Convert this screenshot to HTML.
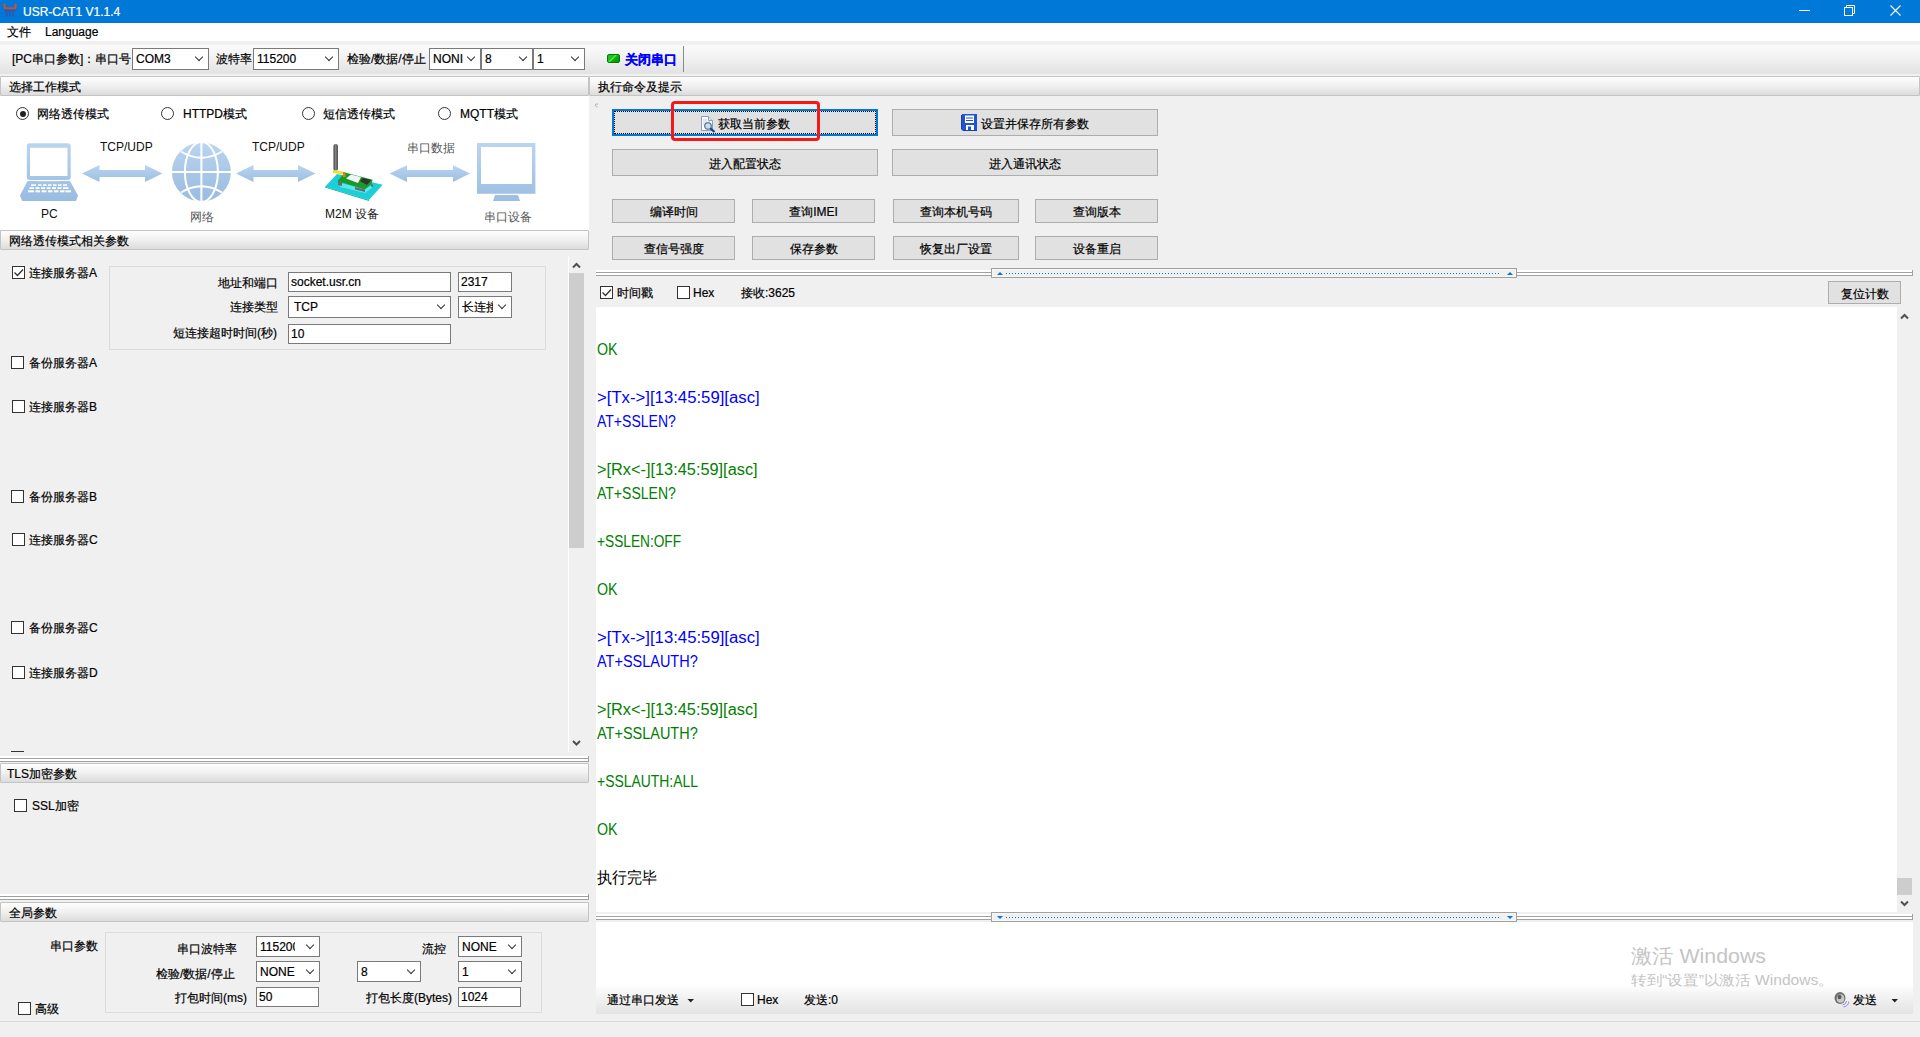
<!DOCTYPE html>
<html><head><meta charset="utf-8">
<style>
*{margin:0;padding:0;box-sizing:border-box}
html,body{width:1920px;height:1037px;overflow:hidden;background:#f0f0f0;font-family:"Liberation Sans",sans-serif;font-size:12px;color:#000;-webkit-text-stroke:0.2px currentColor}
.a{position:absolute}
.t{position:absolute;white-space:nowrap;line-height:14px}
.hdr{position:absolute;height:20px;border:1px solid #c4c4c4;border-radius:1px;background:linear-gradient(#fdfdfd,#f2f2f2 45%,#dcdcdc);}
.hdr span{position:absolute;left:8px;top:3px;line-height:14px;white-space:nowrap}
.cmb{position:absolute;background:#fff;border:1px solid #7a7a7a;height:22px}
.cmb span{position:absolute;left:3px;top:3px;line-height:14px;white-space:nowrap}
.cmb i{position:absolute;right:6px;top:5px;width:6px;height:6px;border-right:1px solid #333;border-bottom:1px solid #333;transform:rotate(45deg);}
.inp{position:absolute;background:#fff;border:1px solid #7a7a7a;height:20px}
.inp span{position:absolute;left:2px;top:2px;line-height:14px;white-space:nowrap}
.btn{position:absolute;background:#e1e1e1;border:1px solid #adadad;text-align:center;white-space:nowrap}
.btn span{position:absolute;left:0;right:0;line-height:14px}
.cb{position:absolute;width:13px;height:13px;border:1px solid #333;background:#fff}
.rb{position:absolute;width:13px;height:13px;border:1px solid #333;border-radius:50%;background:#fff}
.split{position:absolute;height:6px;background:linear-gradient(#fff 0 2px,#a0a0a0 2px 3px,#fff 3px 5px,#a0a0a0 5px 6px);border-right:1px solid #a0a0a0}
.hbox{position:absolute;width:526px;height:10px;background:#f0f0f0;border:1px solid #a0a0a0;box-shadow:inset 0 0 0 1px #f7f7f7}
.dots{position:absolute;height:1px;background:repeating-linear-gradient(90deg,#0a74d6 0 1px,transparent 1px 3px)}
.log{position:absolute;left:597px;transform-origin:0 0;-webkit-text-stroke:0;font-size:16px;line-height:20px;white-space:nowrap}
.g{color:#008000}.b{color:#0000ff}
.ic{fill:#a9c9ec}
</style></head><body>
<!-- title bar -->
<div class="a" style="left:0;top:0;width:1920px;height:23px;background:#0078d7"></div>
<div class="t" style="left:23px;top:5px;color:#fff;font-size:12px">USR-CAT1 V1.1.4</div>
<!-- menu -->
<div class="a" style="left:0;top:23px;width:1920px;height:18px;background:#fff"></div>
<div class="t" style="left:7px;top:25px">文件</div>
<div class="t" style="left:45px;top:25px">Language</div>
<!-- toolbar -->
<div class="a" style="left:0;top:45px;width:1920px;height:29px;background:linear-gradient(#fbfbfb,#f0f0f0 50%,#e2e2e2)"></div>
<div class="t" style="left:12px;top:52px">[PC串口参数]：串口号</div>
<div class="cmb" style="left:132px;top:48px;width:77px"><span>COM3</span><i></i></div>
<div class="t" style="left:216px;top:52px">波特率</div>
<div class="cmb" style="left:253px;top:48px;width:86px"><span>115200</span><i></i></div>
<div class="t" style="left:347px;top:52px">检验/数据/停止</div>
<div class="cmb" style="left:429px;top:48px;width:52px"><span>NONI</span><i></i></div>
<div class="cmb" style="left:481px;top:48px;width:52px"><span>8</span><i></i></div>
<div class="cmb" style="left:533px;top:48px;width:52px"><span>1</span><i></i></div>
<div class="a" style="left:607px;top:54px;width:13px;height:9px;background:linear-gradient(135deg,#20c020 0 35%,#50f050 45%,#10b010 55%,#009000);border:1px solid #007a00;border-radius:2px"></div>
<div class="t" style="left:625px;top:53px;color:#0000ff;font-weight:bold;font-size:13px">关闭串口</div>
<div class="a" style="left:683px;top:46px;width:1px;height:26px;background:#8a8a8a"></div>

<!-- headers -->
<div class="hdr" style="left:0px;top:76px;width:589px"><span>选择工作模式</span></div>
<div class="hdr" style="left:589px;top:76px;width:1331px"><span style="left:8px">执行命令及提示</span></div>
<svg class="a" style="left:594px;top:103px" width="6" height="5"><path d="M4,1 Q1,0.5 1,2.5 L3.5,4" stroke="#aaa" stroke-width="0.9" fill="none"/></svg>

<!-- mode panel -->
<div class="a" style="left:0;top:96px;width:589px;height:134px;background:#fff"></div>
<div class="rb" style="left:16px;top:107px"><div class="a" style="left:2.5px;top:2.5px;width:6px;height:6px;border-radius:50%;background:#222"></div></div>
<div class="t" style="left:37px;top:107px">网络透传模式</div>
<div class="rb" style="left:161px;top:107px"></div>
<div class="t" style="left:183px;top:107px">HTTPD模式</div>
<div class="rb" style="left:302px;top:107px"></div>
<div class="t" style="left:323px;top:107px">短信透传模式</div>
<div class="rb" style="left:438px;top:107px"></div>
<div class="t" style="left:460px;top:107px">MQTT模式</div>


<svg class="a" style="left:0;top:130px" width="589" height="100" viewBox="0 130 589 100">
<defs>
<linearGradient id="bg1" x1="0" y1="0" x2="0" y2="1"><stop offset="0" stop-color="#bad5ef"/><stop offset="1" stop-color="#98bbe1"/></linearGradient><linearGradient id="lap" gradientUnits="userSpaceOnUse" x1="0" y1="143" x2="0" y2="201"><stop offset="0" stop-color="#bad5ef"/><stop offset="1" stop-color="#98bbe1"/></linearGradient><linearGradient id="mon" gradientUnits="userSpaceOnUse" x1="0" y1="143" x2="0" y2="201"><stop offset="0" stop-color="#bad5ef"/><stop offset="1" stop-color="#9cbee2"/></linearGradient>
<linearGradient id="ar" x1="0" y1="0" x2="0" y2="1"><stop offset="0" stop-color="#b9d4ee"/><stop offset="1" stop-color="#9dbfe3"/></linearGradient>
</defs>
<!-- laptop -->
<path fill="url(#lap)" d="M30,143.2 H67.7 A3,3 0 0 1 70.7,146.2 V177 A3,3 0 0 1 67.7,180 H29.8 A3,3 0 0 1 26.8,177 V146.2 A3,3 0 0 1 30,143.2 Z M30,147.8 V176 H67.5 V147.8 Z"/>
<path fill="url(#lap)" d="M27.5,181 H70 L78,195.4 L76,201 H22.2 L20,195.4 Z"/>
<g fill="#fff">
<rect x="31" y="184.3" width="5" height="1.6"/><rect x="38" y="184.3" width="3.5" height="1.6"/><rect x="43" y="184.3" width="3.5" height="1.6"/><rect x="48" y="184.3" width="3.5" height="1.6"/><rect x="53" y="184.3" width="3.5" height="1.6"/><rect x="58" y="184.3" width="3.5" height="1.6"/><rect x="63" y="184.3" width="4" height="1.6"/>
<rect x="29.5" y="187.2" width="4.5" height="1.8"/><rect x="35.5" y="187.2" width="4" height="1.8"/><rect x="41" y="187.2" width="4" height="1.8"/><rect x="46.5" y="187.2" width="4" height="1.8"/><rect x="52" y="187.2" width="4" height="1.8"/><rect x="57.5" y="187.2" width="4" height="1.8"/><rect x="63" y="187.2" width="5.5" height="1.8"/>
<rect x="28" y="190.3" width="6" height="2"/><rect x="35.5" y="190.3" width="4.5" height="2"/><rect x="41.5" y="190.3" width="5" height="2"/><rect x="48" y="190.3" width="4.5" height="2"/><rect x="54" y="190.3" width="4.5" height="2"/><rect x="60" y="190.3" width="4.5" height="2"/><rect x="65.5" y="190.3" width="5.5" height="2"/>
<rect x="37" y="180.2" width="23" height="1"/>
</g>
<!-- arrows -->
<path fill="url(#ar)" d="M82,173.4 L99.5,165 V170 H145 V165 L162.5,173.4 L145,182 V177 H99.5 V182 Z"/>
<path fill="url(#ar)" d="M236,173.4 L253.5,165 V170 H298 V165 L315.5,173.4 L298,182 V177 H253.5 V182 Z"/>
<path fill="url(#ar)" d="M389.5,173.5 L407,165.2 V170 H453 V165.2 L470,173.5 L453,182 V177 H407 V182 Z"/>
<!-- globe -->
<g>
<circle cx="201.4" cy="172" r="29.5" fill="url(#bg1)"/>
<g stroke="#fff" stroke-width="2" fill="none">
<line x1="171" y1="172" x2="232" y2="172"/>
<line x1="201.4" y1="142" x2="201.4" y2="202"/>
<ellipse cx="201.4" cy="172" rx="16.5" ry="30"/>
<path d="M181,151.5 Q201.4,164 222,151.5"/>
<path d="M181,192.5 Q201.4,180 222,192.5"/>
</g>
</g>
<!-- M2M device -->
<g>
<path fill="#18d0d6" d="M325,186.7 L337,174 L382.7,184.8 L368.9,200 Z"/><path fill="#5ee6ea" d="M340,183 L365,189 L372,185 L372,188 L365,193 L340,187 Z"/>
<path fill="#0aa8ad" d="M325,186.7 L368.9,200 L369,201 L325,187.6 Z"/>
<path fill="#6a6a7a" d="M338,181 L342,182 L342,186 L338,185 Z M355,187 L365,189.5 L365,192 L355,189.5 Z M371,184 L373,184.5 L373,187 L371,186.5 Z"/>
<path fill="#1a9a2a" d="M337.5,181 L345,172.6 L372.6,179.8 L371.4,183.9 L364.8,189.5 Z"/>
<path fill="#f4f4f4" d="M346,178.5 L351,174.5 L361,177 L358,183 Z"/>
<path fill="#333" d="M360,181 L363,178 L371,180 L367,185 Z"/>
<linearGradient id="ant" x1="0" y1="0" x2="1" y2="0"><stop offset="0" stop-color="#3a3a3a"/><stop offset=".5" stop-color="#8a8a8a"/><stop offset="1" stop-color="#3a3a3a"/></linearGradient><rect x="333.5" y="144" width="4.4" height="26.7" rx="2" fill="url(#ant)"/>
<path fill="#f0e030" d="M333,170 L345,172 L345,175 L333,173 Z"/>
<rect x="343" y="172" width="2.5" height="5" fill="#d08a20"/>
</g>
<!-- monitor -->
<path fill="url(#mon)" d="M477,143 H535.4 V193.8 H477 Z M481,147 V184 H532 V147 Z"/>
<path fill="url(#mon)" d="M495,195 H518 L520,201 H493 Z"/>
</svg>
<div class="t" style="left:100px;top:140px;font-size:12px;color:#111;-webkit-text-stroke:0">TCP/UDP</div>
<div class="t" style="left:252px;top:140px;font-size:12px;color:#111;-webkit-text-stroke:0">TCP/UDP</div>
<div class="t" style="left:407px;top:141px;font-size:11.6px;color:#555;-webkit-text-stroke:0">串口数据</div>
<div class="t" style="left:41px;top:207px;font-size:12px;color:#111;-webkit-text-stroke:0">PC</div>
<div class="t" style="left:190px;top:210px;font-size:11.6px;color:#555;-webkit-text-stroke:0">网络</div>
<div class="t" style="left:325px;top:207px;font-size:12px;color:#111;-webkit-text-stroke:0">M2M 设备</div>
<div class="t" style="left:484px;top:210px;font-size:11.6px;color:#555;-webkit-text-stroke:0">串口设备</div>


<div class="hdr" style="left:0px;top:230px;width:589px"><span>网络透传模式相关参数</span></div>
<!-- scrollbar left -->
<div class="a" style="left:568px;top:256px;width:1px;height:496px;background:#fff"></div>
<div class="a" style="left:569px;top:273px;width:15px;height:275px;background:#cdcdcd"></div>
<svg class="a" style="left:569px;top:259px" width="15" height="12"><path d="M4,8.5 L7.5,5 L11,8.5" stroke="#505050" stroke-width="2" fill="none"/></svg>
<svg class="a" style="left:569px;top:737px" width="15" height="12"><path d="M4,4 L7.5,7.5 L11,4" stroke="#505050" stroke-width="2" fill="none"/></svg>

<div class="cb" style="left:12px;top:266px"><svg class="a" style="left:0;top:0" width="11" height="11"><path d="M1.5,5.5 L4.5,8.5 L10,2.5" stroke="#333" stroke-width="1.3" fill="none"/></svg></div>
<div class="t" style="left:29px;top:266px">连接服务器A</div>
<div class="a" style="left:109px;top:266px;width:437px;height:84px;border:1px solid #dcdcdc"></div>
<div class="t" style="left:218px;top:276px">地址和端口</div>
<div class="inp" style="left:288px;top:272px;width:163px"><span>socket.usr.cn</span></div>
<div class="inp" style="left:458px;top:272px;width:54px"><span>2317</span></div>
<div class="t" style="left:230px;top:300px">连接类型</div>
<div class="cmb" style="left:288px;top:296px;width:163px"><span style="left:5px">TCP</span><i></i></div>
<div class="cmb" style="left:458px;top:296px;width:54px;overflow:hidden"><span style="width:31px;overflow:hidden">长连接</span><i></i></div>
<div class="t" style="left:173px;top:326px">短连接超时时间(秒)</div>
<div class="inp" style="left:288px;top:324px;width:163px"><span>10</span></div>

<div class="cb" style="left:11px;top:356px"></div>
<div class="t" style="left:29px;top:356px">备份服务器A</div>
<div class="cb" style="left:12px;top:400px"></div>
<div class="t" style="left:29px;top:400px">连接服务器B</div>
<div class="cb" style="left:11px;top:490px"></div>
<div class="t" style="left:29px;top:490px">备份服务器B</div>
<div class="cb" style="left:12px;top:533px"></div>
<div class="t" style="left:29px;top:533px">连接服务器C</div>
<div class="cb" style="left:11px;top:621px"></div>
<div class="t" style="left:29px;top:621px">备份服务器C</div>
<div class="cb" style="left:12px;top:666px"></div>
<div class="t" style="left:29px;top:666px">连接服务器D</div>
<div class="a" style="left:11px;top:751px;width:13px;height:1px;background:#333"></div>

<div class="split" style="left:0;top:756px;width:589px"></div>
<div class="hdr" style="left:0px;top:763px;width:589px"><span style="left:6px">TLS加密参数</span></div>
<div class="cb" style="left:14px;top:799px"></div>
<div class="t" style="left:32px;top:799px">SSL加密</div>

<div class="split" style="left:0;top:894px;width:589px"></div>
<div class="hdr" style="left:0px;top:902px;width:589px"><span>全局参数</span></div>
<div class="t" style="left:50px;top:939px">串口参数</div>
<div class="a" style="left:105px;top:932px;width:437px;height:81px;border:1px solid #dcdcdc"></div>
<div class="t" style="left:177px;top:942px">串口波特率</div>
<div class="cmb" style="left:256px;top:936px;width:64px;height:21px;overflow:hidden"><span style="width:35px;overflow:hidden">115200</span><i></i></div>
<div class="t" style="left:422px;top:942px">流控</div>
<div class="cmb" style="left:458px;top:936px;width:64px;height:21px"><span>NONE</span><i></i></div>
<div class="t" style="left:156px;top:967px">检验/数据/停止</div>
<div class="cmb" style="left:256px;top:961px;width:64px;height:21px"><span>NONE</span><i></i></div>
<div class="cmb" style="left:357px;top:961px;width:64px;height:21px"><span>8</span><i></i></div>
<div class="cmb" style="left:458px;top:961px;width:64px;height:21px"><span>1</span><i></i></div>
<div class="t" style="left:175px;top:991px">打包时间(ms)</div>
<div class="inp" style="left:256px;top:987px;width:63px"><span>50</span></div>
<div class="t" style="left:366px;top:991px">打包长度(Bytes)</div>
<div class="inp" style="left:458px;top:987px;width:63px"><span>1024</span></div>
<div class="cb" style="left:18px;top:1002px"></div>
<div class="t" style="left:35px;top:1002px">高级</div>
<div class="a" style="left:0;top:1021px;width:1920px;height:1px;background:#dadada"></div>


<!-- buttons -->
<div class="btn" style="left:612px;top:109px;width:266px;height:27px;border:2px solid #0078d7;background:#e1e1e1"><div class="a" style="left:0;top:0;right:0;bottom:0;border:1px dotted #000"></div>
<svg class="a" style="left:86px;top:5px" width="17" height="17" viewBox="0 0 17 17"><path d="M1.5,0.5 H8.5 L12.5,4.5 V14.5 H1.5 Z" fill="#fafcff" stroke="#8aa0c0"/><path d="M8.5,0.5 V4.5 H12.5" fill="#dde6f2" stroke="#8aa0c0"/><path d="M3,4 H7 M3,6 H10 M3,8 H6" stroke="#c0c8d4" stroke-width="0.8"/><circle cx="8" cy="10" r="3.3" fill="#bfe0f7" stroke="#556070" stroke-width="1.1"/><path d="M10.4,12.4 L14.5,16" stroke="#1a3f9a" stroke-width="2.2"/></svg>
<span style="top:6px;left:104px;right:auto">获取当前参数</span></div>
<div class="btn" style="left:892px;top:109px;width:266px;height:27px"><svg class="a" style="left:68px;top:4px" width="17" height="17" viewBox="0 0 17 17"><path d="M0,1 H15 L16,2 V17 H2 L0,15 Z" fill="#1c3f9e"/><rect x="1" y="0" width="15" height="16" fill="#2055d0"/><rect x="4" y="1.5" width="9" height="7.5" fill="#fff"/><path d="M5,4 H12 M5,6.5 H12" stroke="#2055d0" stroke-width="1"/><rect x="5" y="11" width="8" height="5" fill="#fff"/><rect x="7" y="12.5" width="3" height="3.5" fill="#2055d0"/></svg><span style="top:7px;left:88px;right:auto">设置并保存所有参数</span></div>
<div class="btn" style="left:612px;top:149px;width:266px;height:27px"><span style="top:7px">进入配置状态</span></div>
<div class="btn" style="left:892px;top:149px;width:266px;height:27px"><span style="top:7px">进入通讯状态</span></div>
<div class="btn" style="left:612px;top:199px;width:123px;height:24px"><span style="top:5px">编译时间</span></div>
<div class="btn" style="left:752px;top:199px;width:123px;height:24px"><span style="top:5px">查询IMEI</span></div>
<div class="btn" style="left:893px;top:199px;width:126px;height:24px"><span style="top:5px">查询本机号码</span></div>
<div class="btn" style="left:1035px;top:199px;width:123px;height:24px"><span style="top:5px">查询版本</span></div>
<div class="btn" style="left:612px;top:236px;width:123px;height:24px"><span style="top:5px">查信号强度</span></div>
<div class="btn" style="left:752px;top:236px;width:123px;height:24px"><span style="top:5px">保存参数</span></div>
<div class="btn" style="left:893px;top:236px;width:126px;height:24px"><span style="top:5px">恢复出厂设置</span></div>
<div class="btn" style="left:1035px;top:236px;width:123px;height:24px"><span style="top:5px">设备重启</span></div>
<div class="a" style="left:671px;top:101px;width:149px;height:40px;border:3px solid #f51818;border-radius:4px"></div>

<!-- splitter top -->
<div class="split" style="left:596px;top:270px;width:1317px"></div>
<div class="hbox" style="left:991px;top:268px"></div>
<div class="dots" style="left:1006px;top:273px;width:494px"></div>
<svg class="a" style="left:996px;top:271px" width="8" height="5"><path d="M1,4 L4,1 L7,4 Z" fill="#0a74d6"/></svg>
<svg class="a" style="left:1506px;top:271px" width="8" height="5"><path d="M1,4 L4,1 L7,4 Z" fill="#0a74d6"/></svg>
<div class="cb" style="left:600px;top:286px"><svg class="a" style="left:0;top:0" width="11" height="11"><path d="M1.5,5.5 L4.5,8.5 L10,2.5" stroke="#333" stroke-width="1.3" fill="none"/></svg></div>
<div class="t" style="left:617px;top:286px">时间戳</div>
<div class="cb" style="left:677px;top:286px"></div>
<div class="t" style="left:693px;top:286px">Hex</div>
<div class="t" style="left:741px;top:286px">接收:3625</div>
<div class="btn" style="left:1828px;top:281px;width:73px;height:23px"><span style="top:5px">复位计数</span></div>

<!-- log -->
<div class="a" style="left:596px;top:307px;width:1301px;height:605px;background:#fff"></div>
<div class="a" style="left:1897px;top:307px;width:15px;height:605px;background:#f0f0f0"></div>
<div class="a" style="left:1897px;top:878px;width:15px;height:17px;background:#cdcdcd"></div>
<svg class="a" style="left:1897px;top:310px" width="15" height="12"><path d="M4,8.5 L7.5,5 L11,8.5" stroke="#505050" stroke-width="2" fill="none"/></svg>
<svg class="a" style="left:1897px;top:898px" width="15" height="12"><path d="M4,3.5 L7.5,7 L11,3.5" stroke="#505050" stroke-width="2" fill="none"/></svg>

<div class="log g" style="top:340px;transform:scaleX(0.89)">OK</div>
<div class="log b" style="top:388px;transform:scaleX(1.045)">&gt;[Tx-&gt;][13:45:59][asc]</div>
<div class="log b" style="top:412px;transform:scaleX(0.876)">AT+SSLEN?</div>
<div class="log g" style="top:460px;transform:scaleX(1.02)">&gt;[Rx&lt;-][13:45:59][asc]</div>
<div class="log g" style="top:484px;transform:scaleX(0.876)">AT+SSLEN?</div>
<div class="log g" style="top:532px;transform:scaleX(0.856)">+SSLEN:OFF</div>
<div class="log g" style="top:580px;transform:scaleX(0.89)">OK</div>
<div class="log b" style="top:628px;transform:scaleX(1.045)">&gt;[Tx-&gt;][13:45:59][asc]</div>
<div class="log b" style="top:652px;transform:scaleX(0.905)">AT+SSLAUTH?</div>
<div class="log g" style="top:700px;transform:scaleX(1.02)">&gt;[Rx&lt;-][13:45:59][asc]</div>
<div class="log g" style="top:724px;transform:scaleX(0.905)">AT+SSLAUTH?</div>
<div class="log g" style="top:772px;transform:scaleX(0.87)">+SSLAUTH:ALL</div>
<div class="log g" style="top:820px;transform:scaleX(0.89)">OK</div>
<div class="log" style="top:868px;color:#000;transform:scaleX(0.94)">执行完毕</div>

<!-- splitter bottom -->
<div class="split" style="left:596px;top:914px;width:1317px"></div>
<div class="hbox" style="left:991px;top:912px"></div>
<div class="dots" style="left:1006px;top:917px;width:494px"></div>
<svg class="a" style="left:996px;top:915px" width="8" height="5"><path d="M1,1 L7,1 L4,4 Z" fill="#0a74d6"/></svg>
<svg class="a" style="left:1506px;top:915px" width="8" height="5"><path d="M1,1 L7,1 L4,4 Z" fill="#0a74d6"/></svg>
<!-- send area -->
<div class="a" style="left:596px;top:922px;width:1317px;height:63px;background:#fff"></div>
<div class="a" style="left:596px;top:985px;width:1317px;height:29px;background:linear-gradient(#fefefe,#f1f1f1 45%,#e3e3e3)"></div>
<div class="t" style="left:607px;top:993px">通过串口发送</div>
<svg class="a" style="left:687px;top:998px" width="8" height="6"><path d="M0.5,1 L7,1 L3.75,4.5 Z" fill="#222"/></svg>
<div class="cb" style="left:741px;top:993px"></div>
<div class="t" style="left:757px;top:993px">Hex</div>
<div class="t" style="left:804px;top:993px">发送:0</div>
<div class="t" style="left:1631px;top:945px;font-size:20px;line-height:22px;color:#c4c4c4;-webkit-text-stroke:0;transform-origin:0 0;transform:scaleX(1.065)">激活 Windows</div>
<div class="t" style="left:1631px;top:972px;font-size:14px;line-height:16px;color:#c4c4c4;-webkit-text-stroke:0;transform-origin:0 0;transform:scaleX(1.115)">转到“设置”以激活 Windows。</div>
<svg class="a" style="left:1833px;top:991px" width="17" height="17" viewBox="0 0 17 17"><ellipse cx="7" cy="7" rx="5.5" ry="6" fill="#6e6e6e"/><ellipse cx="7.5" cy="7.5" rx="3.8" ry="4.3" fill="#c8c8c8"/><ellipse cx="6.5" cy="6" rx="2" ry="2.2" fill="#5a5a5a"/><path d="M9.5,14 Q13,13.5 13.5,10 M10.5,16 Q15.5,15 15.8,10.5" stroke="#8080f0" stroke-width="0.9" fill="none"/></svg>
<div class="t" style="left:1853px;top:993px">发送</div>
<svg class="a" style="left:1891px;top:998px" width="8" height="6"><path d="M0.5,1 L7,1 L3.75,4.5 Z" fill="#222"/></svg>

<!-- window controls -->
<div class="a" style="left:1799px;top:10px;width:11px;height:1px;background:#fff"></div>
<svg class="a" style="left:1844px;top:5px" width="11" height="11" viewBox="0 0 11 11"><path d="M2.5,2.5 V0.5 H10.5 V8.5 H8.5" stroke="#fff" fill="none"/><rect x="0.5" y="2.5" width="8" height="8" stroke="#fff" fill="none"/></svg>
<svg class="a" style="left:1890px;top:5px" width="11" height="11" viewBox="0 0 11 11"><path d="M0.5,0.5 L10.5,10.5 M10.5,0.5 L0.5,10.5" stroke="#fff" stroke-width="1.1"/></svg>
<svg class="a" style="left:0;top:0" width="20" height="20" viewBox="0 0 20 20"><path d="M4.5,4.5 Q4.2,8.5 6,8.5 H14.5 Q15.8,8.5 15.5,4.5" stroke="#d84a2a" stroke-width="2.2" fill="none" stroke-linecap="round"/><rect x="4.5" y="9.3" width="11" height="2.5" fill="#2a5ab0"/><path d="M6.5,11.5 L7,16.5 M9.8,11.5 L9.8,16.5 M13,11.5 L12.8,16.5" stroke="#2a5ab0" stroke-width="1.8"/></svg>

</body></html>
